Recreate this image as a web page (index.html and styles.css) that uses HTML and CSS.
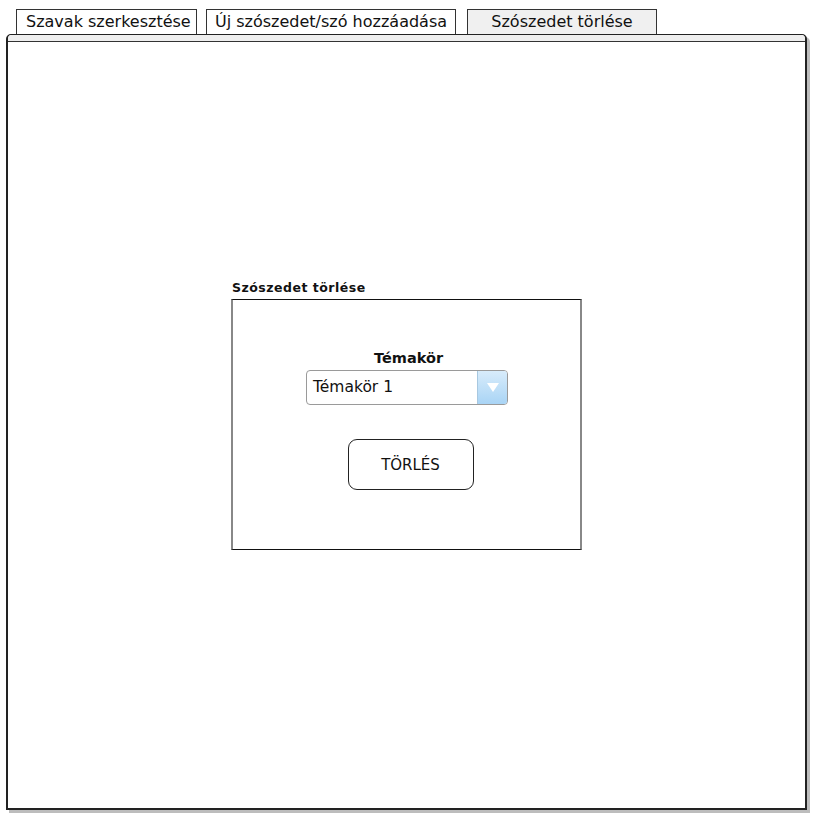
FILE: index.html
```html
<!DOCTYPE html>
<html lang="hu">
<head>
<meta charset="utf-8">
<title>Szószedet törlése</title>
<link rel="stylesheet" href="styles.css">
</head>
<body>
<div class="tabs">
  <div class="tab tab-1">Szavak szerkesztése</div>
  <div class="tab tab-2">Új szószedet/szó hozzáadása</div>
  <div class="tab tab-3 active">Szószedet törlése</div>
</div>
<div class="panel">
  <div class="panel-head"></div>
  <div class="panel-body">
    <div class="group">
      <div class="group-label">Szószedet törlése</div>
      <div class="group-box">
        <div class="field-label">Témakör</div>
        <div class="select">
          <span class="select-text">Témakör 1</span>
          <span class="select-btn">
            <svg width="12" height="9" viewBox="0 0 12 9"><path d="M0 0 L12 0 L6 9 Z" fill="#fff"/></svg>
          </span>
        </div>
        <div class="button">TÖRLÉS</div>
      </div>
    </div>
  </div>
</div>
</body>
</html>
```

FILE: styles.css
```css
* { box-sizing: border-box; }
html, body { margin: 0; padding: 0; background: #fff; }
body {
  font-family: "DejaVu Sans", sans-serif;
  color: #111;
  width: 813px;
  height: 817px;
  overflow: hidden;
}
.tabs {
  display: flex;
  padding: 9px 0 0 16px;
  height: 34px;
}
.tab {
  height: 25px;
  border: 1px solid #333;
  border-bottom: none;
  font-size: 16px;
  line-height: 24px;
  padding: 0 9px;
  background: #fff;
  white-space: nowrap;
}
.tab-1 { width: 181px; margin-right: 9px; }
.tab-2 { width: 250px; margin-right: 11px; padding-left: 8px; }
.tab-3 { width: 190px; text-align: center; background: #f0f0f0; }
.panel {
  margin-left: 6px;
  width: 801px;
  height: 776px;
  border: 1px solid #222;
  border-left-width: 2px;
  border-right-width: 2px;
  border-bottom-width: 2px;
  border-radius: 5px 5px 0 0;
  background: #fff;
  box-shadow: 3px 3px 0 #bdbdbd;
  display: flex;
  flex-direction: column;
}
.panel-head {
  height: 7px;
  background: #eeeeee;
  border-bottom: 1px solid #333;
  border-radius: 4px 4px 0 0;
}
.panel-body {
  flex: 1;
  display: flex;
  align-items: center;
  justify-content: center;
  padding-bottom: 20px;
}
.group {
  width: 351px;
  display: flex;
  flex-direction: column;
}
.group-label {
  font-size: 12.5px;
  letter-spacing: 0.5px;
  font-weight: bold;
  line-height: 14px;
  padding-left: 1px;
  margin-bottom: 4px;
}
.group-box {
  height: 251px;
  border-top: 1px solid #111;
  border-bottom: 1px solid #111;
  border-left: 2px solid #888;
  border-right: 2px solid #888;
  display: flex;
  flex-direction: column;
  align-items: center;
  padding-top: 49px;
}
.field-label {
  font-size: 14.5px;
  font-weight: bold;
  line-height: 18px;
  margin-bottom: 3px;
  padding-left: 4px;
}
.select {
  width: 202px;
  height: 35px;
  border: 1px solid #9a9a9a;
  border-radius: 4px;
  display: flex;
  align-items: stretch;
  overflow: hidden;
  margin-left: 1px;
}
.select-text {
  flex: 1;
  font-size: 15.5px;
  line-height: 33px;
  padding-left: 6px;
}
.select-btn {
  width: 30px;
  border-left: 1px solid #a8c8e0;
  background: linear-gradient(#d8ecfb, #a9d4f5);
  display: flex;
  align-items: center;
  justify-content: center;
}
.button {
  margin-top: 34px;
  width: 126px;
  height: 51px;
  border: 1px solid #222;
  border-radius: 9px;
  font-size: 15px;
  text-align: center;
  line-height: 50px;
  margin-left: 8px;
}
```
